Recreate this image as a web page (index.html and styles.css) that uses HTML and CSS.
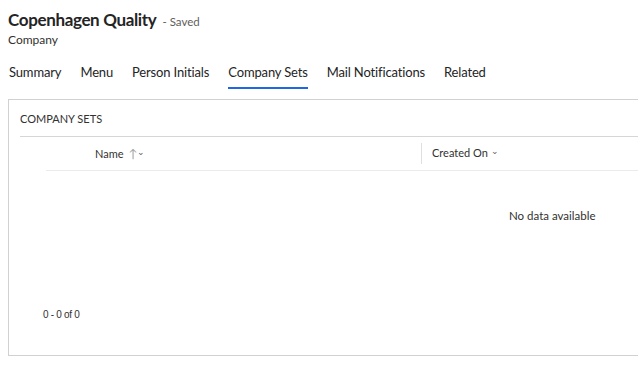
FILE: index.html
```html
<!DOCTYPE html>
<html>
	<head>
		<meta charset="utf-8">
		<title>Copenhagen Quality - Company</title>
		<link rel="stylesheet" href="styles.css">
	</head>
	<body>
		<div class="page">

			<!-- record header -->
			<div class="head">
				<div class="title-line">
					<span class="title">Copenhagen Quality</span>
					<span class="saved">- Saved</span>
				</div>
				<div class="entity">Company</div>
			</div>

			<!-- tabs -->
			<ul class="tabs">
				<li class="tab">Summary</li>
				<li class="tab">Menu</li>
				<li class="tab">Person Initials</li>
				<li class="tab active">Company Sets</li>
				<li class="tab">Mail Notifications</li>
				<li class="tab">Related</li>
			</ul>

			<!-- subgrid section -->
			<div class="panel">
				<div class="panel-title">COMPANY SETS</div>
				<div class="grid">
					<div class="grid-head">
						<div class="col col-check"></div>
						<div class="col col-name">Name <span class="sort">&#8593;</span><span class="chev">&#8964;</span></div>
						<div class="col col-created">Created On <span class="chev">&#8964;</span></div>
					</div>
					<div class="empty">No data available</div>
				</div>
				<div class="pager">0 - 0 of 0</div>
			</div>

		</div>
	</body>
</html>
```

FILE: styles.css
```css
html, body {
	margin: 0;
	padding: 0;
	background-color: #fff;
	overflow: hidden;
}

.page {
	padding: 0 0 0 8px;
	font-family: Lato, "Open Sans", sans-serif;
	color: #323130;
}

/* ######## header */
.head {
	padding-top: 8px;
}
.title-line {
	height: 24px;
	line-height: 24px;
	white-space: nowrap;
}
.title {
	font-size: 17px;
	font-weight: 700;
	letter-spacing: -0.35px;
	color: #242424;
}
.saved {
	font-size: 11.5px;
	color: #605e5c;
	margin-left: 2px;
}
.entity {
	font-size: 12px;
	line-height: 16px;
	color: #323130;
}

/* ######## tabs */
.tabs {
	list-style: none;
	margin: 14px 0 0 1px;
	padding: 0;
	display: flex;
	height: 29px;
}
.tab {
	font-size: 13px;
	line-height: 20px;
	letter-spacing: -0.15px;
	padding: 0 19px 0 0;
	color: #242424;
	position: relative;
}
.tab.active::after {
	/* blue bar under the active tab */
	content: "";
	position: absolute;
	left: 0;
	right: 19px;
	bottom: 2px;
	height: 2px;
	background-color: #2266e3;
}

/* ######## panel */
.panel {
	margin-top: 8px;
	height: 257px;
	border: 1px solid #d1d1d1;
	border-right: none;
	box-sizing: border-box;
	padding: 0 0 0 11px;
}
.panel-title {
	font-size: 11px;
	line-height: 16px;
	padding: 11px 0 9px 0;
	border-bottom: 1px solid #d6d6d6;
}

.grid {
	margin-left: 26px;
}
.grid-head {
	display: flex;
	height: 33px;
	border-bottom: 1px solid #edebe9;
	font-size: 11px;
	align-items: center;
}
.col-check {
	width: 49px;
}
.col-name {
	width: 326px;
}
.col-created {
	border-left: 1px solid #e1dfdd;
	padding-left: 10px;
	line-height: 20px;
}
.sort {
	color: #a19f9d;
	font-size: 12px;
	margin-left: 2px;
}
.chev {
	font-size: 9px;
	color: #605e5c;
	position: relative;
	top: -3px;
}

.empty {
	font-size: 11.5px;
	padding: 38px 0 0 463px;
	height: 100px;
	color: #323130;
}

.pager {
	font-family: "Liberation Sans", Arial, sans-serif;
	font-size: 10px;
	letter-spacing: -0.3px;
	margin-left: 23px;
	margin-top: 0;
	color: #323130;
}
```
